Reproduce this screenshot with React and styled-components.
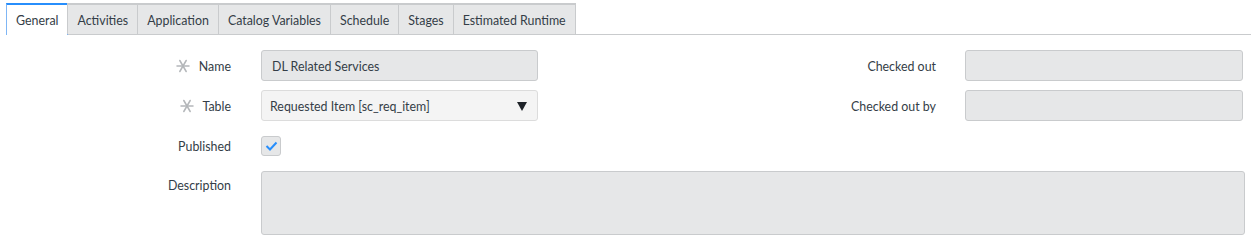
import React from 'react';
import styled, { createGlobalStyle } from 'styled-components';

const GlobalStyle = createGlobalStyle`
  body {
    margin: 0;
    background: #fff;
    font-family: Lato, "Open Sans", sans-serif;
    color: #343d47;
  }
`;

const Page = styled.div`
  width: 1251px;
  height: 240px;
  padding-top: 3px;
  box-sizing: border-box;
  overflow: hidden;
`;

const TabBar = styled.div`
  display: flex;
  margin-left: 6px;
  border-bottom: 1px solid #c9cbcd;
`;

const Tab = styled.div`
  box-sizing: border-box;
  display: flex;
  align-items: center;
  padding: 1px 9px 0;
  font-size: 12.4px;
  color: #343d47;
  background: ${props => (props.active ? '#fff' : '#e6e7e8')};
  border: 1px solid ${props => (props.active ? '#7fb6f5' : '#c9cbcd')};
  border-top: 2px solid ${props => (props.active ? '#278efc' : '#c9cbcd')};
  border-bottom: none;
  margin-left: -1px;
  margin-bottom: ${props => (props.active ? '-1px' : '0')};
  height: ${props => (props.active ? '32px' : '31px')};
  &:first-child {
    margin-left: 0;
  }
`;

const Form = styled.div`
  display: grid;
  grid-template-columns: 231px 277px 1fr 278px;
  column-gap: 30px;
  row-gap: 9px;
  padding: 15px 8px 0 0;
`;

const Label = styled.div`
  display: flex;
  align-items: ${props => (props.top ? 'flex-start' : 'center')};
  justify-content: flex-end;
  font-size: 12.4px;
  color: #343d47;
  padding-top: ${props => (props.top ? '8px' : '1px')};
  height: ${props => (props.small ? '31px' : 'auto')};
  box-sizing: border-box;
`;

const RightLabel = styled(Label)`
  margin-right: -1px;
`;

const Star = styled.svg`
  width: 14px;
  height: 14px;
  margin-right: 9px;
`;

const Input = styled.div`
  height: 31px;
  box-sizing: border-box;
  background: #e6e7e8;
  border: 1px solid #c9cbcd;
  border-radius: 3px;
  display: flex;
  align-items: center;
  padding: 1px 10px 0;
  font-size: 12.4px;
  color: #343d47;
`;

const Select = styled(Input)`
  background: #f4f4f4;
  border-color: #dcdcdc;
  justify-content: space-between;
  padding: 1px 10px 0 8px;
`;

const CheckRow = styled.div`
  height: 31px;
  display: flex;
  align-items: center;
`;

const Checkbox = styled.div`
  width: 20px;
  height: 20px;
  box-sizing: border-box;
  background: #e6e7e8;
  border: 1px solid #c9cbcd;
  border-radius: 3px;
  display: flex;
  align-items: center;
  justify-content: center;
`;

const TextArea = styled(Input)`
  grid-column: 2 / -1;
  height: 64px;
  margin-top: 1px;
  margin-right: -2px;
`;

const Mandatory = () => (
  <Star viewBox="0 0 14 14">
    <g stroke="#b4b7ba" strokeWidth="1.5" strokeLinecap="round">
      <line x1="1" y1="7" x2="13" y2="7" />
      <line x1="3.8" y1="1.5" x2="10.2" y2="12.5" />
      <line x1="10.2" y1="1.5" x2="3.8" y2="12.5" />
    </g>
  </Star>
);

const tabs = ['General', 'Activities', 'Application', 'Catalog Variables', 'Schedule', 'Stages', 'Estimated Runtime'];

export default function App() {
  return (
    <Page>
      <GlobalStyle />
      <TabBar>
        {tabs.map((t, i) => (
          <Tab key={t} active={i === 0}>{t}</Tab>
        ))}
      </TabBar>
      <Form>
        <Label><Mandatory />Name</Label>
        <Input>DL Related Services</Input>
        <RightLabel>Checked out</RightLabel>
        <Input />

        <Label><Mandatory />Table</Label>
        <Select>
          Requested Item [sc_req_item]
          <svg width="10" height="9" viewBox="0 0 10 9">
            <polygon points="0,0 10,0 5,9" fill="#1e2328" />
          </svg>
        </Select>
        <RightLabel>Checked out by</RightLabel>
        <Input />

        <Label small>Published</Label>
        <CheckRow>
          <Checkbox>
            <svg width="13" height="10" viewBox="0 0 13 10">
              <polyline points="1.5,5 5,8.5 11.5,1.5" fill="none" stroke="#278efc" strokeWidth="2" />
            </svg>
          </Checkbox>
        </CheckRow>
        <div />
        <div />

        <Label top>Description</Label>
        <TextArea />
      </Form>
    </Page>
  );
}
